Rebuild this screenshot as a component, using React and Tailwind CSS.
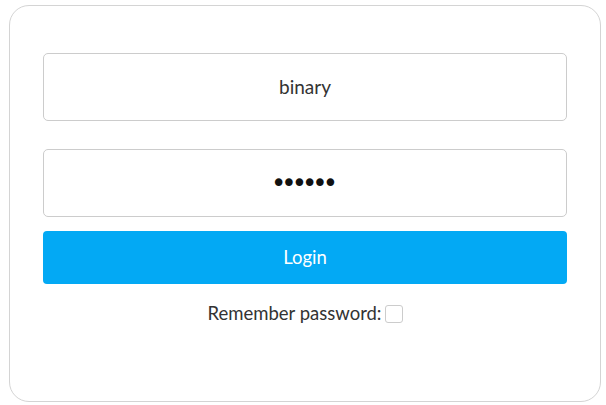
export default function App() {
  return (
    <div className="w-[606px] h-[405px] bg-white pt-[5px] pl-[9px]" style={{ fontFamily: "Lato, 'Open Sans', sans-serif" }}>
      <div className="w-[592px] h-[397px] border border-[#d4d4d4] rounded-[20px] px-[33px] pt-[47px]">
        <div className="h-[68px] border border-[#cccccc] rounded-[5px] flex items-center justify-center text-[19px] text-[#333]">
          binary
        </div>
        <div className="h-[68px] mt-[28px] border border-[#cccccc] rounded-[5px] flex items-center justify-center text-[#111]">
          <span className="text-[26px] tracking-[-5px] leading-none mr-[6px]" style={{ fontFamily: "'DejaVu Sans', sans-serif" }}>••••••</span>
        </div>
        <div className="h-[53px] mt-[14px] rounded-[4px] bg-[#03a9f4] flex items-center justify-center text-white text-[18.5px]">
          Login
        </div>
        <div className="mt-[16px] flex items-center justify-center text-[18.5px] text-[#333]">
          <span>Remember password:</span>
          <span className="ml-[3px] w-[18px] h-[18px] border border-[#cccccc] rounded-[3px] bg-white inline-block"></span>
        </div>
      </div>
    </div>
  );
}
